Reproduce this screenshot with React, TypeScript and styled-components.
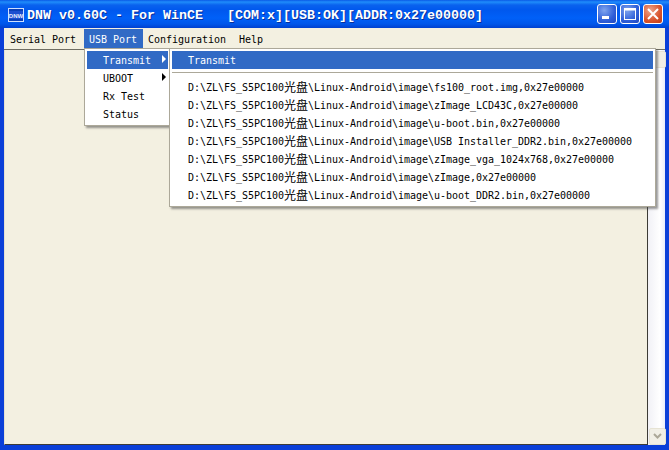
import styled, { createGlobalStyle } from "styled-components";

const GlobalStyle = createGlobalStyle`
  html, body {
    margin: 0;
    padding: 0;
    background: #f3f0e1;
    overflow: hidden;
  }
`;

const uiFont = `"DejaVu Sans Mono", "Noto Sans CJK SC", monospace`;

const Window = styled.div`
  width: 669px;
  height: 450px;
  box-sizing: border-box;
  display: flex;
  flex-direction: column;
  background: #0a3fd8;
  font-family: ${uiFont};
  overflow: hidden;
`;

const TitleBar = styled.div`
  height: 28px;
  flex: none;
  display: flex;
  align-items: center;
  padding: 2px 6px 0 8px;
  box-sizing: border-box;
  background: linear-gradient(
    180deg,
    #0a5ae6 0,
    #1f8dfb 2px,
    #0a62ee 5px,
    #0058ee 10px,
    #0060f8 18px,
    #0056ea 24px,
    #0040d0 28px
  );
`;

const AppIcon = styled.svg`
  width: 16px;
  height: 14px;
  flex: none;
`;

const Title = styled.div`
  margin-left: 3px;
  flex: 1;
  color: #fff;
  font-family: "Liberation Mono", monospace;
  font-size: 13.33px;
  font-weight: 700;
  white-space: pre;
  text-shadow: 1px 1px 0 #0a2f9a;
`;

const WinButtons = styled.div`
  display: flex;
  gap: 3px;
  margin-top: -2px;
`;

const WinButton = styled.div<{ $close?: boolean }>`
  width: 20px;
  height: 20px;
  box-sizing: border-box;
  border: 1px solid #fff;
  border-radius: 3px;
  display: flex;
  align-items: center;
  justify-content: center;
  background: ${(p) =>
    p.$close
      ? "radial-gradient(circle at 35% 30%, #eea58c, #d8532c 60%, #c03a16)"
      : "radial-gradient(circle at 35% 30%, #7fa4ee, #2f5fd8 60%, #2047c0)"};
`;

const Body = styled.div`
  flex: 1;
  min-height: 0;
  display: flex;
  flex-direction: column;
  margin: 0 4px 5px 4px;
  background: #f3f0e1;
`;

const MenuBar = styled.div`
  height: 22px;
  flex: none;
  display: flex;
  padding-left: 1px;
  box-sizing: border-box;
  padding-top: 1px;
  background: #f3f0e1;
  border-bottom: 1px solid #6f6d62;
`;

const MenuItem = styled.div<{ $open?: boolean; $after?: number }>`
  position: relative;
  height: 19px;
  box-sizing: border-box;
  padding: 1px 6px 0 5px;
  margin-right: ${(p) => p.$after ?? 0}px;
  display: flex;
  align-items: center;
  font-size: 10px;
  letter-spacing: -0.02px;
  white-space: pre;
  color: ${(p) => (p.$open ? "#fff" : "#000")};
  background: ${(p) => (p.$open ? "#316ac5" : "transparent")};
`;

const Popup = styled.div`
  position: absolute;
  box-sizing: border-box;
  padding: 2px;
  background: #fff;
  border: 1px solid #aca899;
  box-shadow: 2px 2px 2px rgba(70, 70, 70, 0.55);
  color: #000;
  z-index: 2;
`;

const UsbMenu = styled(Popup)`
  left: 0;
  top: 19px;
  width: 87px;
  height: 78px;
`;

const FileMenu = styled(Popup)`
  left: 82px;
  top: -3px;
  width: 487px;
  height: 159px;
`;

const PopupRow = styled.div<{ $active?: boolean }>`
  position: relative;
  height: 18px;
  padding-left: 16px;
  display: flex;
  align-items: center;
  font-size: 10px;
  letter-spacing: -0.02px;
  white-space: pre;
  color: ${(p) => (p.$active ? "#fff" : "#000")};
  background: ${(p) => (p.$active ? "#316ac5" : "transparent")};
`;

const Arrow = styled.span<{ $light?: boolean }>`
  position: absolute;
  right: 2px;
  top: 4px;
  width: 0;
  height: 0;
  border-left: 4px solid ${(p) => (p.$light ? "#fff" : "#000")};
  border-top: 4px solid transparent;
  border-bottom: 4px solid transparent;
`;

const Separator = styled.div`
  height: 1px;
  margin: 3px 0 5px;
  background: #aca899;
`;

const Cjk = styled.span`
  font-family: "Noto Sans CJK SC", sans-serif;
  font-size: 12px;
  line-height: 12px;
`;

const Client = styled.div`
  flex: 1;
  min-height: 0;
  display: flex;
`;

const Canvas = styled.div`
  flex: 1;
  background: #f3f0e1;
  border-left: 1px solid #e3e0d2;
  border-bottom: 1px solid #3c3b35;
  border-right: 1px solid #3c3b35;
`;

const ScrollBar = styled.div`
  width: 17px;
  flex: none;
  box-sizing: border-box;
  display: flex;
  flex-direction: column;
  justify-content: space-between;
  padding: 1px 0 0 1px;
  background: linear-gradient(90deg, #f1f1f6, #ffffff 70%, #e9eefb);
`;

const ScrollButton = styled.div`
  width: 15px;
  height: 15px;
  border: 1px solid #e6e3d4;
  border-radius: 2px;
  background: #f1efe6;
  color: #aca899;
  display: flex;
  align-items: center;
  justify-content: center;
`;

const files = [
  "fs100_root.img",
  "zImage_LCD43C",
  "u-boot.bin",
  "USB Installer_DDR2.bin",
  "zImage_vga_1024x768",
  "zImage",
  "u-boot_DDR2.bin",
];

const App = () => {
  return (
    <>
      <GlobalStyle />
      <Window>
        <TitleBar>
          <AppIcon viewBox="0 0 16 14">
            <rect x="0.5" y="0.5" width="15" height="13" fill="#0a3fb8" stroke="#cfe0ff" />
            <rect x="1" y="3" width="14" height="8" fill="#1d4fd0" />
            <text x="8" y="9.5" fontSize="6" fontFamily="Liberation Sans" fontWeight="700" textAnchor="middle" fill="#e8f0ff">
              DNW
            </text>
          </AppIcon>
          <Title>{"DNW v0.60C - For WinCE   [COM:x][USB:OK][ADDR:0x27e00000]"}</Title>
          <WinButtons>
            <WinButton>
              <svg width="18" height="18" viewBox="0 0 18 18">
                <rect x="4" y="11" width="7" height="3" fill="#fff" />
              </svg>
            </WinButton>
            <WinButton>
              <svg width="18" height="18" viewBox="0 0 18 18">
                <rect x="3.5" y="4.5" width="11" height="10" fill="none" stroke="#fff" />
                <rect x="3" y="3" width="12" height="2.5" fill="#fff" />
              </svg>
            </WinButton>
            <WinButton $close>
              <svg width="18" height="18" viewBox="0 0 18 18">
                <path d="M4 4l10 10M14 4L4 14" stroke="#fff" strokeWidth="2" fill="none" />
              </svg>
            </WinButton>
          </WinButtons>
        </TitleBar>
        <Body>
          <MenuBar>
            <MenuItem $after={2}>Serial Port</MenuItem>
            <MenuItem $open>
              USB Port
              <UsbMenu>
                <PopupRow $active>
                  Transmit
                  <Arrow $light />
                  <FileMenu>
                    <PopupRow $active>Transmit</PopupRow>
                    <Separator />
                    {files.map((name) => (
                      <PopupRow key={name}>
                        {"D:\\ZL\\FS_S5PC100"}
                        <Cjk>光盘</Cjk>
                        {`\\Linux-Android\\image\\${name},0x27e00000`}
                      </PopupRow>
                    ))}
                  </FileMenu>
                </PopupRow>
                <PopupRow>
                  UBOOT
                  <Arrow />
                </PopupRow>
                <PopupRow>Rx Test</PopupRow>
                <PopupRow>Status</PopupRow>
              </UsbMenu>
            </MenuItem>
            <MenuItem $after={2}>Configuration</MenuItem>
            <MenuItem>Help</MenuItem>
          </MenuBar>
          <Client>
            <Canvas />
            <ScrollBar>
              <ScrollButton />
              <ScrollButton>
                <svg width="9" height="7" viewBox="0 0 9 7">
                  <path d="M1 1l3.5 3.5L8 1" stroke="#aca899" strokeWidth="2" fill="none" />
                </svg>
              </ScrollButton>
            </ScrollBar>
          </Client>
        </Body>
      </Window>
    </>
  );
};

export default App;
